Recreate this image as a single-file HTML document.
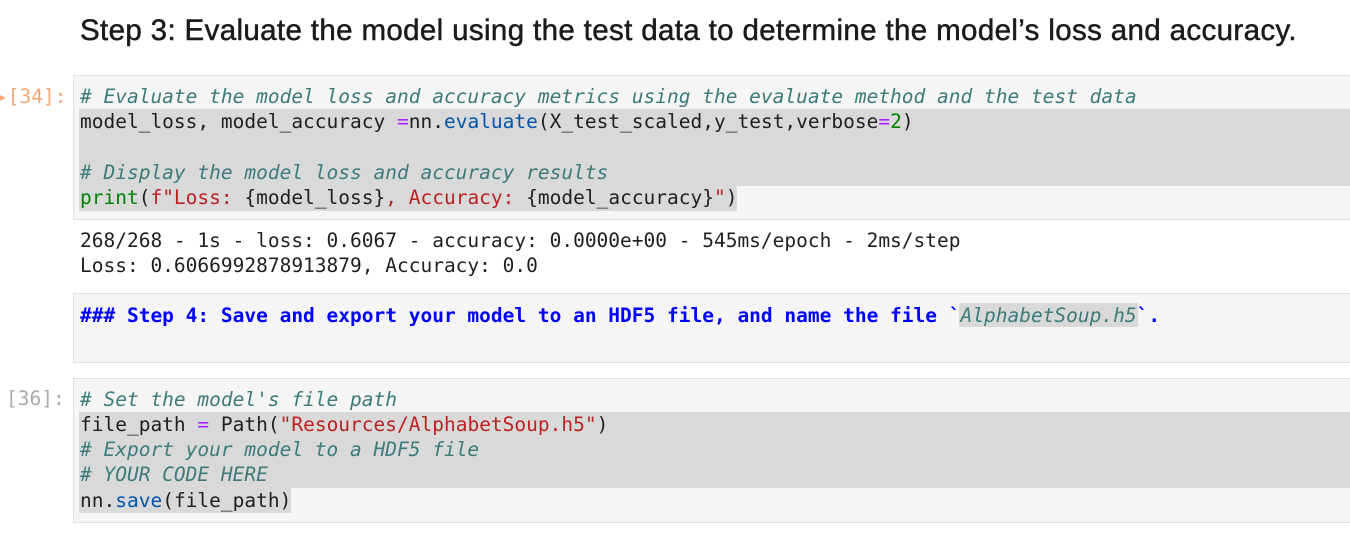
<!DOCTYPE html>
<html><head><style>
body{margin:0;width:1350px;height:540px;background:#fff;position:relative;overflow:hidden;font-family:"DejaVu Sans Mono",monospace;}
.t{position:absolute;left:80px;top:14px;font:400 29.5px "Liberation Sans",sans-serif;color:#1b1b1b;white-space:nowrap;letter-spacing:0.36px;-webkit-text-stroke:0.5px #1b1b1b}
.cell{position:absolute;left:73px;width:1290px;background:#f5f5f5;border:1px solid #e0e0e0;}
.hl{position:absolute;background:#d9d9d9;}
.l{position:absolute;left:80px;font-size:19.5px;line-height:25px;white-space:pre;color:#1f1f1f;}
.c{color:#3d7a7a;font-style:italic}
.s{color:#ba2121}.g{color:#008000}.o{color:#aa22ff}.b{color:#0055aa}
.p{position:absolute;font-size:19.5px;line-height:25px;white-space:pre;}
.m{color:#0000ff;font-weight:bold}
</style></head><body>
<div class="t">Step 3: Evaluate the model using the test data to determine the model’s loss and accuracy.</div>

<div class="cell" style="top:75px;height:143px"></div>
<div class="hl" style="left:79px;top:109px;width:1271px;height:77px"></div>
<div class="hl" style="left:79px;top:186px;width:658px;height:25px"></div>
<div class="p" style="left:-4px;top:84px;color:#f5a878">▸[34]:</div>
<div class="l c" style="top:84px"># Evaluate the model loss and accuracy metrics using the evaluate method and the test data</div>
<div class="l" style="top:109px">model_loss, model_accuracy <span class="o">=</span>nn.<span class="b">evaluate</span>(X_test_scaled,y_test,verbose<span class="o">=</span><span class="g">2</span>)</div>
<div class="l c" style="top:160px"># Display the model loss and accuracy results</div>
<div class="l" style="top:185px"><span class="g">print</span>(<span class="s">f"Loss: </span>{model_loss}<span class="s">, Accuracy: </span>{model_accuracy}<span class="s">"</span>)</div>

<div class="l" style="top:228px">268/268 - 1s - loss: 0.6067 - accuracy: 0.0000e+00 - 545ms/epoch - 2ms/step</div>
<div class="l" style="top:253px">Loss: 0.6066992878913879, Accuracy: 0.0</div>

<div class="cell" style="top:293px;height:68px"></div>
<div class="hl" style="left:959px;top:303px;width:179px;height:24px"></div>
<div class="l m" style="top:303px">### Step 4: Save and export your model to an HDF5 file, and name the file `<span class="c" style="font-weight:normal">AlphabetSoup.h5</span>`.</div>

<div class="cell" style="top:378px;height:143px"></div>
<div class="hl" style="left:79px;top:412px;width:1271px;height:76px"></div>
<div class="hl" style="left:79px;top:488px;width:212px;height:25px"></div>
<div class="p" style="left:6px;top:386px;color:#aaa">[36]:</div>
<div class="l c" style="top:387px"># Set the model's file path</div>
<div class="l" style="top:412px">file_path <span class="o">=</span> Path(<span class="s">"Resources/AlphabetSoup.h5"</span>)</div>
<div class="l c" style="top:437px"># Export your model to a HDF5 file</div>
<div class="l c" style="top:462px"># YOUR CODE HERE</div>
<div class="l" style="top:488px">nn.<span class="b">save</span>(file_path)</div>
</body></html>
